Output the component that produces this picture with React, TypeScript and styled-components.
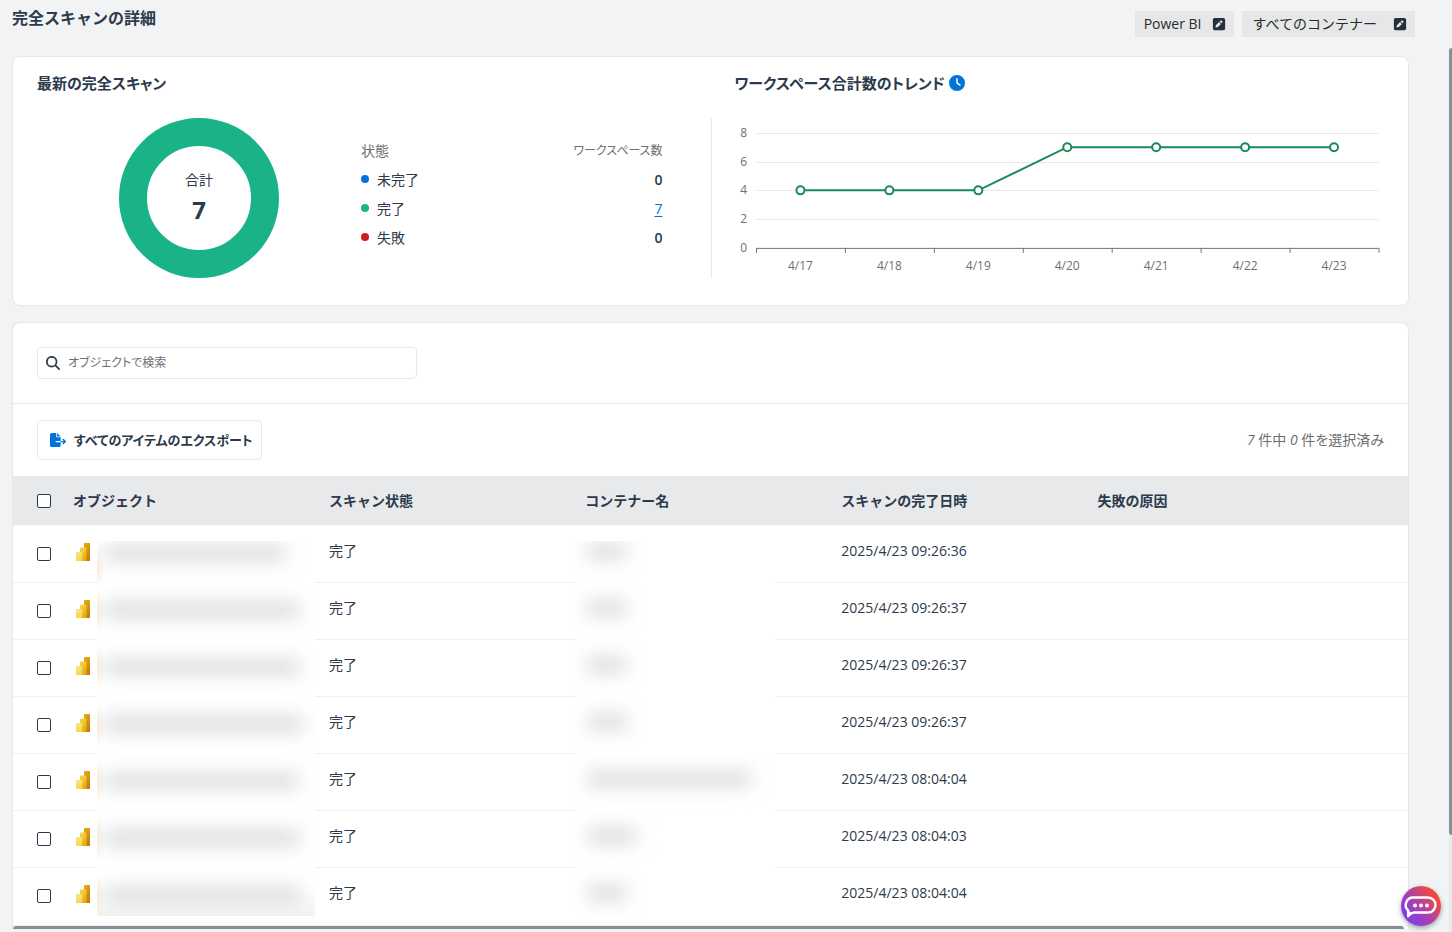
import React from 'react';
import styled, { createGlobalStyle } from 'styled-components';
import { FaSquarePen, FaClock, FaMagnifyingGlass, FaFileExport } from 'react-icons/fa6';

const color = {
  text: '#2c3a4b',
  muted: '#6e6e6e',
  line: '#e6e7e9',
  page: '#f1f3f5',
  head: '#e7e9eb',
  blue: '#0073d9',
  green: '#1ab387',
  red: '#d01b1b',
  thumb: '#868f98',
};

const GlobalStyle = createGlobalStyle`
  * { box-sizing: border-box; }
  body {
    margin: 0;
    background: ${color.page};
    color: ${color.text};
    font: 14px/20px "Open Sans", "Noto Sans CJK JP", sans-serif;
  }
  button, input { font: inherit; color: inherit; }
`;

const Page = styled.div`
  min-height: 100vh;
  display: flex;
  flex-direction: column;
`;

const Header = styled.header`
  display: flex;
  justify-content: space-between;
  align-items: flex-start;
  height: 48px;
  padding: 0 37px 0 12px;
`;

const PageTitle = styled.h1`
  margin: 6px 0 0;
  font-size: 16px;
  line-height: 24px;
  font-weight: 600;
`;

const Filters = styled.div`
  display: flex;
  gap: 8px;
  padding-top: 11px;
`;

const FilterChip = styled.button<{ $wide?: boolean }>`
  display: flex;
  align-items: center;
  gap: ${(p) => (p.$wide ? 16 : 10)}px;
  height: 26px;
  padding: 0 8px 0 ${(p) => (p.$wide ? 11 : 9)}px;
  border: 0;
  background: #e5e7e9;
  color: #2b2b2b;
  svg { color: #26303c; }
`;

const Body = styled.div`
  flex: 1;
  display: flex;
`;

const Content = styled.main`
  flex: 1;
  min-width: 0;
  padding: 8px 40px 3px 12px;
  display: flex;
  flex-direction: column;
  gap: 16px;
`;

const ScrollTrack = styled.div`
  width: 3px;
  background: #e8eaec;
`;

const ScrollThumb = styled.div`
  height: 89%;
  border-radius: 3px 0 0 3px;
  background: ${color.thumb};
`;

const Card = styled.section`
  background: #fff;
  border: 1px solid ${color.line};
  border-radius: 8px;
`;

const Summary = styled(Card)`
  display: grid;
  grid-template-columns: 1fr 1fr;
  row-gap: 23px;
  padding: 14px 24px 27px;
`;

const CardTitle = styled.h2<{ $inset?: boolean }>`
  display: flex;
  align-items: center;
  gap: 4px;
  margin: 0;
  padding-left: ${(p) => (p.$inset ? 24 : 0)}px;
  font-size: 15px;
  line-height: 24px;
  font-weight: 600;
  font-feature-settings: "palt";
  svg { color: ${color.blue}; }
`;

const ScanStatus = styled.div`
  display: flex;
  align-items: flex-start;
  gap: 82px;
  padding: 0 48px 0 82px;
`;

const Donut = styled.div`
  flex: none;
  width: 160px;
  height: 160px;
  padding-top: 4px;
  border: 28px solid ${color.green};
  border-radius: 50%;
  display: flex;
  flex-direction: column;
  align-items: center;
  justify-content: center;
`;

const DonutValue = styled.strong`
  font-size: 24px;
  line-height: 40px;
  font-weight: 700;
`;

const Legend = styled.table`
  flex: 1;
  margin-top: 18px;
  border-collapse: collapse;
  th, td { height: 29px; padding: 0; text-align: left; font-weight: 400; }
  thead th { color: ${color.muted}; font-feature-settings: "palt"; }
  thead th:last-child { font-size: 12px; }
  th:last-child, td:last-child { text-align: right; }
`;

const Dot = styled.span<{ $color: string }>`
  display: inline-block;
  width: 8px;
  height: 8px;
  margin-right: 8px;
  border-radius: 50%;
  vertical-align: 2px;
  background: ${(p) => p.$color};
`;

const Count = styled.span`
  font-weight: 600;
`;

const CountLink = styled.a`
  color: ${color.blue};
  text-underline-offset: 2px;
`;

const Trend = styled.div`
  padding-left: 24px;
  border-left: 1px solid ${color.line};
`;

const Chart = styled.svg`
  display: block;
  width: 100%;
  font-size: 12px;
  fill: #6b6f76;
`;

const SearchBar = styled.div`
  padding: 24px;
  border-bottom: 1px solid ${color.line};
`;

const SearchBox = styled.label`
  display: flex;
  align-items: center;
  gap: 8px;
  width: 380px;
  max-width: 100%;
  height: 32px;
  padding: 0 8px;
  border: 1px solid ${color.line};
  border-radius: 4px;
`;

const SearchInput = styled.input`
  flex: 1;
  min-width: 0;
  padding: 0;
  border: 0;
  outline: 0;
  background: none;
  font-size: 12px;
  font-feature-settings: "palt";
  &::placeholder { color: ${color.muted}; opacity: 1; }
`;

const ActionBar = styled.div`
  display: flex;
  justify-content: space-between;
  align-items: center;
  height: 72px;
  padding: 0 24px;
`;

const ExportButton = styled.button`
  display: flex;
  align-items: center;
  gap: 8px;
  height: 40px;
  padding: 0 8px 0 12px;
  border: 1px solid ${color.line};
  border-radius: 4px;
  background: #fff;
  font-size: 13px;
  font-weight: 600;
  font-feature-settings: "palt";
  svg { color: ${color.blue}; }
`;

const Selection = styled.span`
  color: ${color.muted};
  font-feature-settings: "palt";
`;

const DataTable = styled.table`
  width: 100%;
  table-layout: fixed;
  border-collapse: separate;
  border-spacing: 0;
`;

const CheckCol = styled.col`
  width: 48px;
`;

const DataCol = styled.col`
  width: 18.36%;
`;

const HeadCell = styled.th`
  height: 50px;
  padding: 0 12px;
  background: ${color.head};
  border-bottom: 1px solid #f6f7f8;
  text-align: left;
  font-weight: 600;
  &:first-child { padding-left: 24px; padding-right: 0; }
`;

const Cell = styled.td`
  position: relative;
  height: 57px;
  padding: 15px 12px 0;
  border-bottom: 1px solid #eff0f1;
  vertical-align: top;
  tr:last-child > & { height: 58px; }
`;

const CheckCell = styled(Cell)`
  padding: 21px 0 0 24px;
`;

const IconCell = styled(Cell)`
  padding: 17px 12px 0 15px;
`;

const Checkbox = styled.input`
  appearance: none;
  display: block;
  width: 14px;
  height: 14px;
  margin: 0;
  border: 1px solid ${color.text};
  border-radius: 2px;
  background: #fff;
  &:checked { background: ${color.blue}; }
`;

type Edge = 'first' | 'middle' | 'last';

const nameTint = 'radial-gradient(ellipse 8px 22px at 0 28px, #fbecd6, rgba(255, 255, 255, 0))';

const Redacted = styled.div<{ $kind: 'name' | 'container'; $edge: Edge }>`
  position: absolute;
  z-index: 1;
  left: ${(p) => (p.$kind === 'name' ? 36 : 2)}px;
  width: ${(p) => (p.$kind === 'name' ? 218 : 200)}px;
  top: ${(p) => (p.$edge === 'first' ? 15 : 0)}px;
  bottom: ${(p) => (p.$edge === 'last' ? 9 : -1)}px;
  overflow: hidden;
  background: ${(p) => {
    if (p.$kind === 'container') return '#fff';
    return p.$edge === 'last'
      ? `${nameTint}, linear-gradient(#fff 50%, #f1f3f3)`
      : `${nameTint}, #fff`;
  }};
`;

const Smudge = styled.div<{ $kind: 'name' | 'container'; $edge: Edge; $size: number }>`
  width: ${(p) => p.$size}px;
  height: 18px;
  margin-left: ${(p) => (p.$kind === 'name' ? 6 : 11)}px;
  margin-top: ${(p) => (p.$kind === 'name' ? 18 : 16) - (p.$edge === 'first' ? 15 : 0)}px;
  border-radius: 8px;
  background: #dddfe2;
  filter: blur(9px);
`;

const BottomScroll = styled.div`
  height: 3px;
  margin-right: 4px;
  border-radius: 3px 3px 0 0;
  background: ${color.thumb};
`;

const ListCard = styled(Card)`
  border-bottom: 0;
  border-radius: 8px 8px 0 0;
`;

const ChatButton = styled.button`
  position: fixed;
  z-index: 2;
  right: 11px;
  bottom: 6px;
  width: 40px;
  height: 40px;
  padding: 0;
  border: 0;
  border-radius: 50%;
  background: linear-gradient(50deg, #7b3fe4 15%, #a840b4 45%, #f0483e 80%);
  box-shadow: 0 2px 5px rgba(0, 0, 0, 0.35);
  svg { display: block; }
`;

const PowerBiIcon = () => (
  <svg width="15" height="18" viewBox="0 0 15 18" aria-hidden="true">
    <defs>
      <linearGradient id="barBack" x1="0" y1="0" x2="0.4" y2="1">
        <stop offset="0" stopColor="#e6ad10" />
        <stop offset="1" stopColor="#c87e0e" />
      </linearGradient>
      <linearGradient id="barMid" x1="0" y1="0" x2="0.3" y2="1">
        <stop offset="0" stopColor="#f6d751" />
        <stop offset="1" stopColor="#e6ad10" />
      </linearGradient>
      <linearGradient id="barFront" x1="0" y1="0" x2="0.3" y2="1">
        <stop offset="0" stopColor="#f9e589" />
        <stop offset="1" stopColor="#f6d751" />
      </linearGradient>
    </defs>
    <rect x="8" y="0" width="6" height="18" rx="0.6" fill="url(#barBack)" />
    <path d="M4.600 4.400h5.200q.6 0 .6.6V18H4V5q0-.6.6-.6z" fill="url(#barMid)" />
    <path d="M.6 9h5q.6 0 .6.6V18H.6q-.6 0-.6-.6V9.600q0-.6.6-.6z" fill="url(#barFront)" />
  </svg>
);

const ChatIcon = () => (
  <svg width="40" height="40" viewBox="0 0 40 40" fill="none" aria-hidden="true">
    <path
      d="M13 11.500h14a7.500 7.500 0 0 1 0 15H13.500c-1.500 0-2.500.3-3.500 1.200L7.200 30.200V24.500A7.500 7.500 0 0 1 13 11.500z"
      stroke="#fff"
      strokeWidth="2.400"
      strokeLinejoin="round"
    />
    <path d="M6.200 24v7.500l4.800-4.500z" fill="#fff" />
    <circle cx="14" cy="19.500" r="2" fill="#fff" />
    <circle cx="20" cy="19.500" r="2" fill="#fff" />
    <circle cx="26" cy="19.500" r="2" fill="#fff" />
  </svg>
);

const trend = [
  { day: '4/17', value: 4 },
  { day: '4/18', value: 4 },
  { day: '4/19', value: 4 },
  { day: '4/20', value: 7 },
  { day: '4/21', value: 7 },
  { day: '4/22', value: 7 },
  { day: '4/23', value: 7 },
];

const AXIS_Y = 130;
const xOf = (i: number) => 64.5 + i * 89;
const yOf = (v: number) => AXIS_Y - v * 14.4;

const TrendChart = () => (
  <Chart viewBox="0 0 649 160" role="img" aria-label="ワークスペース合計数のトレンド">
    {[8, 6, 4, 2].map((v) => (
      <path key={v} d={`M20 ${Math.round(yOf(v)) + 0.5}H643`} stroke="#e6e7e9" />
    ))}
    {[8, 6, 4, 2, 0].map((v) => (
      <text key={v} x="11" y={yOf(v) + 4} textAnchor="end">{v}</text>
    ))}
    <path d={`M20 ${AXIS_Y + 0.5}H643`} stroke="#6b7683" />
    {Array.from({ length: 8 }, (_, i) => (
      <path key={i} d={`M${20.5 + i * 89} ${AXIS_Y}v5`} stroke="#6b7683" />
    ))}
    <polyline
      points={trend.map((p, i) => `${xOf(i)},${yOf(p.value)}`).join(' ')}
      fill="none"
      stroke="#1a8a5a"
      strokeWidth="2"
    />
    {trend.map((p, i) => (
      <circle key={p.day} cx={xOf(i)} cy={yOf(p.value)} r="4" fill="#fff" stroke="#1a8a5a" strokeWidth="2" />
    ))}
    {trend.map((p, i) => (
      <text key={p.day} x={xOf(i)} y="152" textAnchor="middle">{p.day}</text>
    ))}
  </Chart>
);

const rows = [
  { time: '2025/4/23 09:26:36', name: 184, container: 42 },
  { time: '2025/4/23 09:26:37', name: 198, container: 42 },
  { time: '2025/4/23 09:26:37', name: 198, container: 42 },
  { time: '2025/4/23 09:26:37', name: 201, container: 42 },
  { time: '2025/4/23 08:04:04', name: 196, container: 166 },
  { time: '2025/4/23 08:04:03', name: 198, container: 52 },
  { time: '2025/4/23 08:04:04', name: 200, container: 42 },
];

export default function App() {
  return (
    <Page>
      <GlobalStyle />
      <Header>
        <PageTitle>完全スキャンの詳細</PageTitle>
        <Filters>
          <FilterChip type="button">Power BI <FaSquarePen size={14} /></FilterChip>
          <FilterChip type="button" $wide>すべてのコンテナー <FaSquarePen size={14} /></FilterChip>
        </Filters>
      </Header>
      <Body>
        <Content>
          <Summary>
            <CardTitle>最新の完全スキャン</CardTitle>
            <CardTitle $inset>ワークスペース合計数のトレンド<FaClock size={16} /></CardTitle>
            <ScanStatus>
              <Donut>
                <span>合計</span>
                <DonutValue>7</DonutValue>
              </Donut>
              <Legend>
                <thead>
                  <tr><th scope="col">状態</th><th scope="col">ワークスペース数</th></tr>
                </thead>
                <tbody>
                  <tr><td><Dot $color={color.blue} />未完了</td><td><Count>0</Count></td></tr>
                  <tr><td><Dot $color={color.green} />完了</td><td><CountLink href="#completed">7</CountLink></td></tr>
                  <tr><td><Dot $color={color.red} />失敗</td><td><Count>0</Count></td></tr>
                </tbody>
              </Legend>
            </ScanStatus>
            <Trend><TrendChart /></Trend>
          </Summary>

          <ListCard>
            <SearchBar>
              <SearchBox>
                <FaMagnifyingGlass size={14} />
                <SearchInput type="text" placeholder="オブジェクトで検索" aria-label="オブジェクトで検索" />
              </SearchBox>
            </SearchBar>
            <ActionBar>
              <ExportButton type="button"><FaFileExport size={16} />すべてのアイテムのエクスポート</ExportButton>
              <Selection><em>7</em> 件中 <em>0</em> 件を選択済み</Selection>
            </ActionBar>
            <DataTable>
              <colgroup>
                <CheckCol /><DataCol /><DataCol /><DataCol /><DataCol /><col />
              </colgroup>
              <thead>
                <tr>
                  <HeadCell><Checkbox type="checkbox" aria-label="すべて選択" /></HeadCell>
                  <HeadCell scope="col">オブジェクト</HeadCell>
                  <HeadCell scope="col">スキャン状態</HeadCell>
                  <HeadCell scope="col">コンテナー名</HeadCell>
                  <HeadCell scope="col">スキャンの完了日時</HeadCell>
                  <HeadCell scope="col">失敗の原因</HeadCell>
                </tr>
              </thead>
              <tbody>
                {rows.map((row, i) => {
                  const edge: Edge = i === 0 ? 'first' : i === rows.length - 1 ? 'last' : 'middle';
                  return (
                    <tr key={i}>
                      <CheckCell><Checkbox type="checkbox" aria-label={`行 ${i + 1} を選択`} /></CheckCell>
                      <IconCell>
                        <PowerBiIcon />
                        <Redacted $kind="name" $edge={edge}>
                          <Smudge $kind="name" $edge={edge} $size={row.name} />
                        </Redacted>
                      </IconCell>
                      <Cell>完了</Cell>
                      <Cell>
                        <Redacted $kind="container" $edge={edge}>
                          <Smudge $kind="container" $edge={edge} $size={row.container} />
                        </Redacted>
                      </Cell>
                      <Cell>{row.time}</Cell>
                      <Cell />
                    </tr>
                  );
                })}
              </tbody>
            </DataTable>
            <BottomScroll />
          </ListCard>
        </Content>
        <ScrollTrack><ScrollThumb /></ScrollTrack>
      </Body>
      <ChatButton type="button" aria-label="チャット"><ChatIcon /></ChatButton>
    </Page>
  );
}
